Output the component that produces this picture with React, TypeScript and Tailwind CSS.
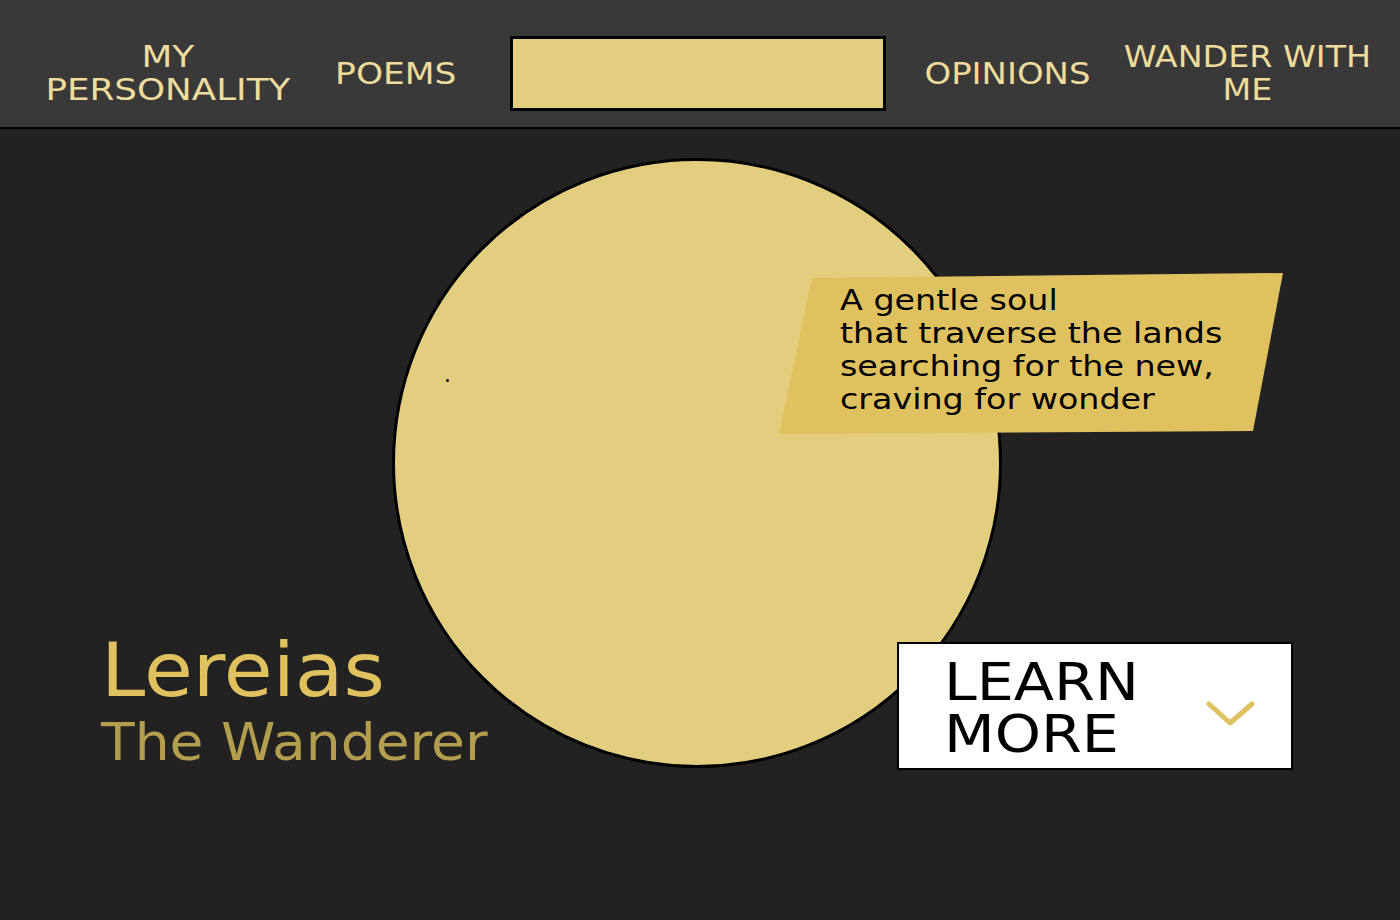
import React from "react";

const font = "font-['DejaVu_Sans',_'Liberation_Sans',_sans-serif]";

// the original face is an extended grotesk, so DejaVu is widened a bit
function NavItem({
  lines,
  className,
  stretch = "scale-x-[1.15]",
}: {
  lines: string[];
  className: string;
  stretch?: string;
}) {
  return (
    <a href="#" className={`block shrink-0 text-center ${className}`}>
      <span
        className={`inline-block ${stretch} text-[30px] leading-[33px] text-[#eedc9c] uppercase whitespace-nowrap`}
      >
        {lines.map((l, i) => (
          <span key={i} className="block">
            {l}
          </span>
        ))}
      </span>
    </a>
  );
}

function Chevron() {
  return (
    <svg width="49" height="27" viewBox="0 0 49 27" fill="none">
      <polyline
        points="3,4 24,23 46,4"
        stroke="#dfc15f"
        strokeWidth="5"
        strokeLinecap="round"
        strokeLinejoin="round"
      />
    </svg>
  );
}

export default function App() {
  return (
    <div className={`min-h-screen bg-[#222222] ${font}`}>
      {/* top navigation */}
      <nav className="h-[129px] bg-[#393939] border-b-2 border-black pt-[20px] pl-[46px] flex items-center">
        <NavItem
          className="w-[244px]"
          stretch="scale-x-[1.19]"
          lines={["My", "Personality"]}
        />
        <NavItem className="ml-[45px] w-[122px]" lines={["Poems"]} />
        <div className="ml-[53px] w-[376px] h-[75px] shrink-0 bg-[#e3cd7e] border-[3px] border-black" />
        <NavItem
          className="ml-[39px] w-[164px]"
          stretch="scale-x-[1.13]"
          lines={["Opinions"]}
        />
        <NavItem
          className="ml-[35px] w-[246px]"
          stretch="scale-x-[1.11]"
          lines={["Wander with", "me"]}
        />
      </nav>

      {/* hero */}
      <main className="flex pt-[29px]">
        <div className="w-[392px] shrink-0 pl-[101px] pt-[475px] whitespace-nowrap">
          <h1 className="origin-left scale-x-[1.06] text-[75px] leading-none text-[#dfc15f]">
            Lereias
          </h1>
          <h2 className="mt-2 origin-left scale-x-[1.06] text-[52px] leading-none text-[#b39d4e]">
            The Wanderer
          </h2>
        </div>

        <div className="relative w-[610px] h-[610px] shrink-0">
          <div className="w-full h-full rounded-full bg-[#e3cd7e] border-[3px] border-black" />
          <span className="absolute left-[54px] top-[221px] w-[3px] h-[3px] rounded-full bg-black" />

          {/* quote tag */}
          <div className="absolute left-[387px] top-[115px] w-[504px] h-[161px] bg-[#dfc15f] [clip-path:polygon(33px_5px,504px_0,474px_158px,0_161px)] pl-[61px] pt-[11px]">
            <p className="origin-left scale-x-[1.19] text-[28px] leading-[33px] text-black whitespace-nowrap">
              A gentle soul
              <br />
              that traverse the lands
              <br />
              searching for the new,
              <br />
              craving for wonder
            </p>
          </div>

          {/* learn more */}
          <button className="absolute left-[505px] top-[484px] w-[396px] h-[128px] bg-white border-2 border-black flex items-start justify-between pl-[45px] pr-[36px] pt-[12px] text-left">
            <span className="block origin-left scale-x-[1.13] text-[52px] leading-[52px] text-black uppercase">
              <span className="block">Learn</span>
              <span className="block">More</span>
            </span>
            <span className="mt-[44px]">
              <Chevron />
            </span>
          </button>
        </div>
      </main>
    </div>
  );
}
